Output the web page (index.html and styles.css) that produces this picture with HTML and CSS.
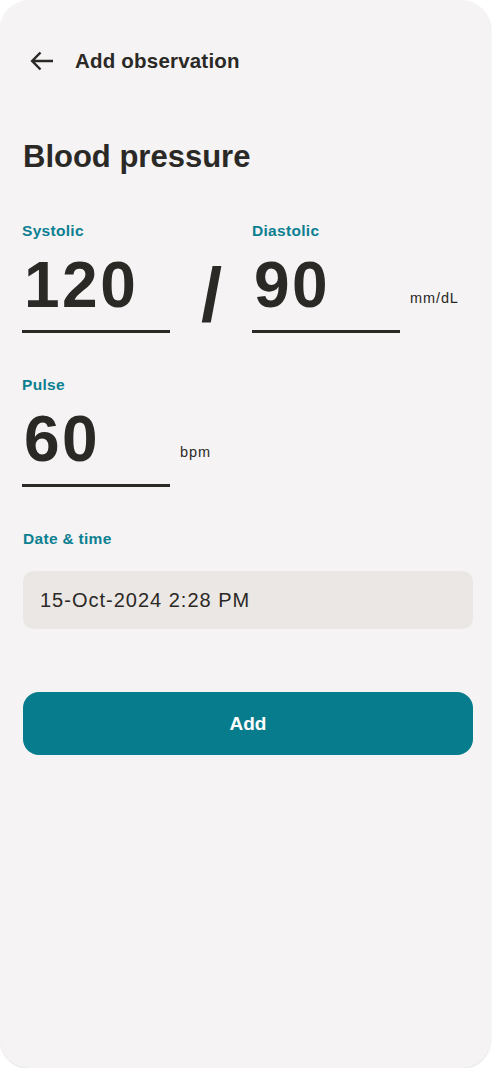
FILE: index.html
```html
<!DOCTYPE html>
<html>
<head>
<meta charset="utf-8">
<link rel="stylesheet" href="styles.css">
</head>
<body>
<div class="card">
  <header class="topbar">
    <svg class="back" width="24" height="24" viewBox="0 0 24 24"><path d="M3 12H23M10.5 3.5L2.2 12l8.3 8.5" fill="none" stroke="#2b2926" stroke-width="2.5" stroke-linejoin="miter"/></svg>
    <span class="title">Add observation</span>
  </header>
  <h1 class="heading">Blood pressure</h1>

  <div class="bp-row">
    <div class="field">
      <div class="label">Systolic</div>
      <div class="value">120</div>
    </div>
    <div class="slash">/</div>
    <div class="field">
      <div class="label">Diastolic</div>
      <div class="value">90</div>
    </div>
    <div class="unit">mm/dL</div>
  </div>

  <div class="pulse-row">
    <div class="field">
      <div class="label">Pulse</div>
      <div class="value">60</div>
    </div>
    <div class="unit">bpm</div>
  </div>

  <div class="label date-label">Date &amp; time</div>
  <div class="date-box">15-Oct-2024 2:28 PM</div>

  <button class="add-btn">Add</button>
</div>
</body>
</html>
```

FILE: styles.css
```css
* { box-sizing: border-box; }
html, body { margin: 0; padding: 0; background: #ffffff; }
body { font-family: "Liberation Sans", Arial, sans-serif; color: #2b2926; }

.card {
  width: 491px;
  height: 1068px;
  background: #f5f3f4;
  border-radius: 30px;
  box-shadow: 0 1px 2px rgba(0,0,0,0.12);
  padding: 33px 19px 0 23px;
}

.topbar {
  height: 56px;
  display: flex;
  align-items: center;
  gap: 21px;
  padding-left: 7px;
}
.back { display: block; }
.title { font-size: 20.5px; font-weight: 700; letter-spacing: 0.2px; }

.heading {
  margin: 50px 0 0 0;
  font-size: 31px;
  line-height: 36px;
  font-weight: 700;
}

.label {
  color: #0b8091;
  font-size: 15.5px;
  font-weight: 700;
  line-height: 18px;
  letter-spacing: 0.3px;
}

.bp-row { display: flex; align-items: flex-end; margin-top: 47px; }
.pulse-row { display: flex; align-items: flex-end; margin-top: 43px; }

.field { width: 148px; margin-left: -1px; }
.value {
  font-size: 64px;
  line-height: 90px;
  font-weight: 700;
  padding-left: 2px;
  border-bottom: 3px solid #2b2926;
  letter-spacing: 2.5px;
}

.slash {
  width: 83px;
  text-align: center;
  font-size: 76px;
  line-height: 76px;
  font-weight: 700;
}

.unit {
  margin-left: 10px;
  padding-bottom: 27px;
  font-size: 14.5px;
  line-height: 16px;
  letter-spacing: 0.9px;
}

.date-label { margin-top: 43px; }

.date-box {
  margin-top: 23px;
  width: 450px;
  height: 58px;
  border-radius: 10px;
  background: #ebe7e4;
  display: flex;
  align-items: center;
  padding-left: 17px;
  font-size: 20px;
  letter-spacing: 1px;
}

.add-btn {
  display: flex;
  align-items: center;
  justify-content: center;
  margin-top: 63px;
  width: 450px;
  height: 63px;
  border: none;
  border-radius: 16px;
  background: #077c8c;
  color: #ffffff;
  font-family: "Liberation Sans", Arial, sans-serif;
  font-size: 19px;
  font-weight: 700;
}
```
